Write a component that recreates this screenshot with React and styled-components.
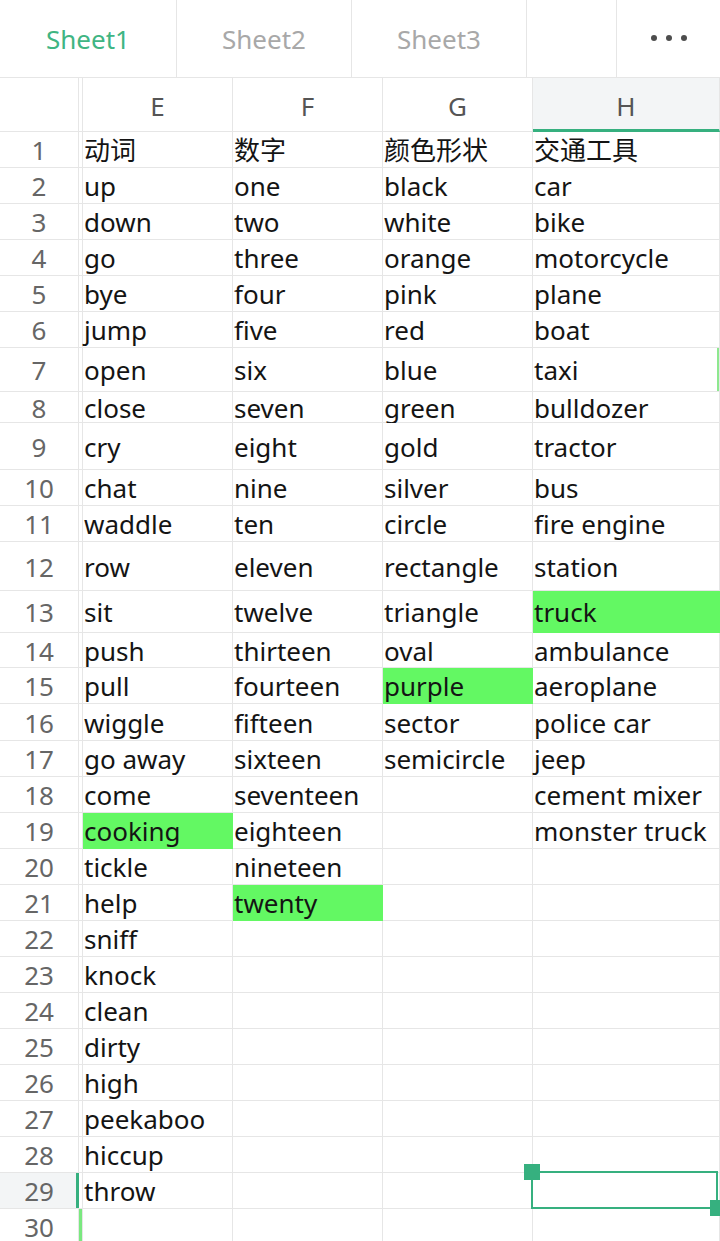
import React from 'react'
import styled, { createGlobalStyle } from 'styled-components'

const GREEN = '#36b07f'
const FILL = '#63f863'
const LINE = '#e6e6e6'

const GlobalStyle = createGlobalStyle`
    html, body {
        margin: 0;
        padding: 0;
        overflow: hidden;
        background: #fff;
        font-family: "Noto Sans", "Noto Sans CJK SC", sans-serif;
    }
`

// row number, cells E..H, row height
const rows = [
    [1, ['动词', '数字', '颜色形状', '交通工具'], 36],
    [2, ['up', 'one', 'black', 'car'], 36],
    [3, ['down', 'two', 'white', 'bike'], 36],
    [4, ['go', 'three', 'orange', 'motorcycle'], 36],
    [5, ['bye', 'four', 'pink', 'plane'], 36],
    [6, ['jump', 'five', 'red', 'boat'], 36],
    [7, ['open', 'six', 'blue', 'taxi'], 44],
    [8, ['close', 'seven', 'green', 'bulldozer'], 31],
    [9, ['cry', 'eight', 'gold', 'tractor'], 47],
    [10, ['chat', 'nine', 'silver', 'bus'], 36],
    [11, ['waddle', 'ten', 'circle', 'fire engine'], 36],
    [12, ['row', 'eleven', 'rectangle', 'station'], 49],
    [13, ['sit', 'twelve', 'triangle', 'truck'], 42],
    [14, ['push', 'thirteen', 'oval', 'ambulance'], 35],
    [15, ['pull', 'fourteen', 'purple', 'aeroplane'], 36],
    [16, ['wiggle', 'fifteen', 'sector', 'police car'], 37],
    [17, ['go away', 'sixteen', 'semicircle', 'jeep'], 36],
    [18, ['come', 'seventeen', '', 'cement mixer'], 36],
    [19, ['cooking', 'eighteen', '', 'monster truck'], 36],
    [20, ['tickle', 'nineteen', '', ''], 36],
    [21, ['help', 'twenty', '', ''], 36],
    [22, ['sniff', '', '', ''], 36],
    [23, ['knock', '', '', ''], 36],
    [24, ['clean', '', '', ''], 36],
    [25, ['dirty', '', '', ''], 36],
    [26, ['high', '', '', ''], 36],
    [27, ['peekaboo', '', '', ''], 36],
    [28, ['hiccup', '', '', ''], 36],
    [29, ['throw', '', '', ''], 36],
    [30, ['', '', '', ''], 36],
]

// which column (0..3) is filled green in a row
const highlights = { 13: 3, 15: 2, 19: 0, 21: 1 }

function App() {
    return (
        <Page>
            <GlobalStyle />
            <TabBar>
                <Tab active>Sheet1</Tab>
                <Tab>Sheet2</Tab>
                <Tab>Sheet3</Tab>
                <Spacer />
                <MoreButton>
                    <Dot /><Dot /><Dot />
                </MoreButton>
            </TabBar>

            <Row height={54}>
                <RowHead />
                <Gap />
                {['E', 'F', 'G', 'H'].map((c) => (
                    <ColHead key={c} current={c === 'H'}>{c}</ColHead>
                ))}
            </Row>

            {rows.map(([n, cells, h]) => (
                <Row key={n} height={h}>
                    <RowHead current={n === 29}>{n}</RowHead>
                    <Gap marker={n >= 30} />
                    {cells.map((text, i) => (
                        <Cell key={i} filled={highlights[n] === i} edge={i === 3 && n === 7}>
                            {text}
                            {i === 3 && n === 29 && (
                                <Selection>
                                    <Handle corner="start" />
                                    <Handle corner="end" />
                                </Selection>
                            )}
                        </Cell>
                    ))}
                </Row>
            ))}
        </Page>
    )
}

export default App

const Page = styled.div`
    width: 720px;
    height: 1241px;
    overflow: hidden;
`

const TabBar = styled.div`
    display: grid;
    grid-template-columns: 177px 175px 175px 90px 1fr;
    height: 78px;
    border-bottom: 1px solid ${LINE};
    box-sizing: border-box;
`

const Tab = styled.div`
    display: flex;
    align-items: center;
    justify-content: center;
    border-right: 1px solid ${LINE};
    font-size: 26px;
    color: ${(p) => (p.active ? '#3fb583' : '#a8a8a8')};
    padding-top: 1px;
`

const Spacer = styled.div`
    border-right: 1px solid ${LINE};
`

const MoreButton = styled.div`
    display: flex;
    align-items: center;
    justify-content: center;
    gap: 9px;
    padding-bottom: 2px;
`

const Dot = styled.span`
    width: 6px;
    height: 6px;
    border-radius: 50%;
    background: #4d4d4d;
`

const Row = styled.div`
    display: grid;
    grid-template-columns: 79px 4px 150px 150px 150px 1fr;
    grid-template-rows: ${(p) => p.height}px;
    height: ${(p) => p.height}px;
    line-height: 28px;
`

const RowHead = styled.div`
    position: relative;
    display: flex;
    align-items: center;
    justify-content: center;
    box-sizing: border-box;
    overflow: visible;
    border-right: 1px solid ${LINE};
    border-bottom: 1px solid ${LINE};
    background: ${(p) => (p.current ? '#f3f5f6' : '#fff')};
    color: #666;
    font-size: 26px;
    padding-top: 1px;

    &::after {
        content: '';
        display: ${(p) => (p.current ? 'block' : 'none')};
        position: absolute;
        top: 0;
        bottom: 0;
        right: -1px;
        width: 3px;
        background: ${GREEN};
    }
`

const Gap = styled.div`
    border-right: 1px solid ${LINE};
    border-bottom: 1px solid ${(p) => (p.marker ? '#fff' : LINE)};
    box-shadow: ${(p) => (p.marker ? `inset 3px 0 0 #7ae87f` : 'none')};
`

const ColHead = styled.div`
    display: flex;
    align-items: center;
    justify-content: center;
    border-right: 1px solid ${LINE};
    border-bottom: ${(p) => (p.current ? `3px solid ${GREEN}` : `1px solid ${LINE}`)};
    background: ${(p) => (p.current ? '#f3f5f6' : '#fff')};
    color: #555;
    font-size: 26px;
    padding-top: ${(p) => (p.current ? '4px' : '2px')};
`

const Cell = styled.div`
    position: relative;
    display: flex;
    align-items: center;
    box-sizing: border-box;
    min-height: 0;
    padding: 1px 0 0 1px;
    border-right: 1px solid ${(p) => (p.filled ? FILL : LINE)};
    border-bottom: 1px solid ${(p) => (p.filled ? FILL : LINE)};
    background: ${(p) => (p.filled ? FILL : '#fff')};
    color: #141414;
    font-size: 26px;
    white-space: nowrap;
    box-shadow: ${(p) => (p.edge ? 'inset -2px 0 0 #8ee88f' : 'none')};
`

const Selection = styled.div`
    position: absolute;
    z-index: 2;
    top: -2px;
    left: -2px;
    right: 1px;
    bottom: -1px;
    border: 2px solid ${GREEN};
`

const Handle = styled.span`
    position: absolute;
    width: 16px;
    height: 16px;
    background: ${GREEN};
    ${(p) => (p.corner === 'start' ? 'top: -9px; left: -9px;' : 'bottom: -9px; right: -10px;')}
`
